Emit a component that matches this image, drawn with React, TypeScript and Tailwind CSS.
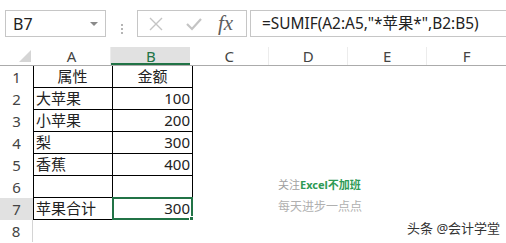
import React from "react";

const font = { fontFamily: '"Noto Sans", "Noto Sans CJK SC", sans-serif' };

const rows: { n: number; a: string; b: string; center?: boolean }[] = [
  { n: 1, a: "属性", b: "金额", center: true },
  { n: 2, a: "大苹果", b: "100" },
  { n: 3, a: "小苹果", b: "200" },
  { n: 4, a: "梨", b: "300" },
  { n: 5, a: "香蕉", b: "400" },
  { n: 6, a: "", b: "" },
  { n: 7, a: "苹果合计", b: "300" },
];

export default function App() {
  return (
    <div
      className="relative w-[506px] h-[243px] overflow-hidden bg-white text-[#222]"
      style={font}
    >
      {/* formula bar */}
      <div className="flex h-[47px] pt-[10px]">
        <div className="ml-[5px] flex h-[27px] w-[101px] items-center justify-between border border-[#c6c6c6] pl-[7px] pr-[7px]">
          <span className="text-[16px] leading-none text-[#222]">B7</span>
          <span className="h-0 w-0 border-l-[4px] border-r-[4px] border-t-[4px] border-l-transparent border-r-transparent border-t-[#8a8a8a]" />
        </div>
        <div className="flex w-[31px] flex-col items-center justify-center gap-[2px]">
          <span className="h-[2px] w-[2px] bg-[#b5b5b5]" />
          <span className="h-[2px] w-[2px] bg-[#b5b5b5]" />
          <span className="h-[2px] w-[2px] bg-[#b5b5b5]" />
        </div>
        <div className="flex h-[27px] w-[110px] items-center border border-[#c6c6c6]">
          <svg width="16" height="16" viewBox="0 0 16 16" className="ml-[10px]">
            <path d="M2 2 L14 14 M14 2 L2 14" stroke="#c4c4c4" strokeWidth="1.4" fill="none" />
          </svg>
          <svg width="18" height="16" viewBox="0 0 18 16" className="ml-[21px]">
            <path d="M2 8 L7 13 L16 3" stroke="#c4c4c4" strokeWidth="2.2" fill="none" />
          </svg>
          <span
            className="ml-[15px] text-[21px] italic leading-none text-[#5e5e5e]"
            style={{ fontFamily: '"Liberation Serif", "DejaVu Serif", serif' }}
          >
            fx
          </span>
        </div>
        <div className="ml-[3px] flex h-[27px] flex-1 items-center border border-r-0 border-[#c6c6c6] pl-[11px]">
          <span className="text-[15.4px] leading-none text-[#222]">=SUMIF(A2:A5,"*苹果*",B2:B5)</span>
        </div>
      </div>

      {/* column headers */}
      <div className="flex h-[19px] border-b border-[#ababab] text-[15px] leading-none text-[#444]">
        <div className="flex w-[33px] items-end justify-end pb-[3px] pr-[2px]">
          <svg width="12" height="12" viewBox="0 0 12 12">
            <polygon points="12,0 12,12 0,12" fill="#d5d5d5" />
          </svg>
        </div>
        <div className="flex w-[80px] items-center justify-center border-r border-[#ececec]">A</div>
        <div className="flex w-[80px] items-center justify-center bg-[#e1e1e1] text-[#217346] shadow-[inset_0_-2px_0_#217346]">B</div>
        <div className="flex w-[80px] items-center justify-center border-r border-[#ececec]">C</div>
        <div className="flex w-[80px] items-center justify-center border-r border-[#ececec]">D</div>
        <div className="flex w-[80px] items-center justify-center border-r border-[#ececec]">E</div>
        <div className="flex w-[80px] items-center justify-center">F</div>
      </div>

      {/* rows */}
      {rows.map((r) => (
        <div key={r.n} className="flex h-[22px] text-[15px] leading-none">
          <div
            className={`flex w-[33px] items-center justify-center text-[#444] ${
              r.n === 7 ? "bg-[#e1e1e1]" : ""
            }`}
          >
            {r.n}
          </div>
          <div
            className={`flex w-[80px] items-center border-l border-r border-b border-black pl-[2px] pr-[3px] ${
              r.center ? "justify-center" : ""
            }`}
          >
            {r.a}
          </div>
          {r.n === 7 ? (
            <div className="relative -ml-[1px] -mt-[1px] flex h-[23px] w-[81px] items-center justify-end border-2 border-[#217346] pr-[1px]">
              {r.b}
              <span className="absolute -bottom-[3px] -right-[3px] h-[5px] w-[5px] border border-white bg-[#217346]" />
            </div>
          ) : (
            <div
              className={`flex w-[80px] items-center border-r border-b border-black px-[2px] ${
                r.center ? "justify-center" : "justify-end"
              }`}
            >
              {r.b}
            </div>
          )}
        </div>
      ))}
      <div className="flex h-[22px] text-[15px] leading-none">
        <div className="flex w-[33px] items-center justify-center border-r border-[#d4d4d4] text-[#444]">8</div>
      </div>

      {/* watermark */}
      <div className="absolute left-[278px] top-[179px] flex flex-col gap-[11px] leading-none">
        <div className="text-[11px] text-[#a0a0a0]">
          关注<span className="font-bold text-[#2e9a55]">Excel不加班</span>
        </div>
        <div className="text-[12px] text-[#b0b0b0]">每天进步一点点</div>
      </div>
      <div
        className="absolute left-[407px] top-[222px] text-[13px] leading-none text-[#333]"
        style={{ textShadow: "0 0 2px #fff" }}
      >
        头条 @会计学堂
      </div>
    </div>
  );
}
